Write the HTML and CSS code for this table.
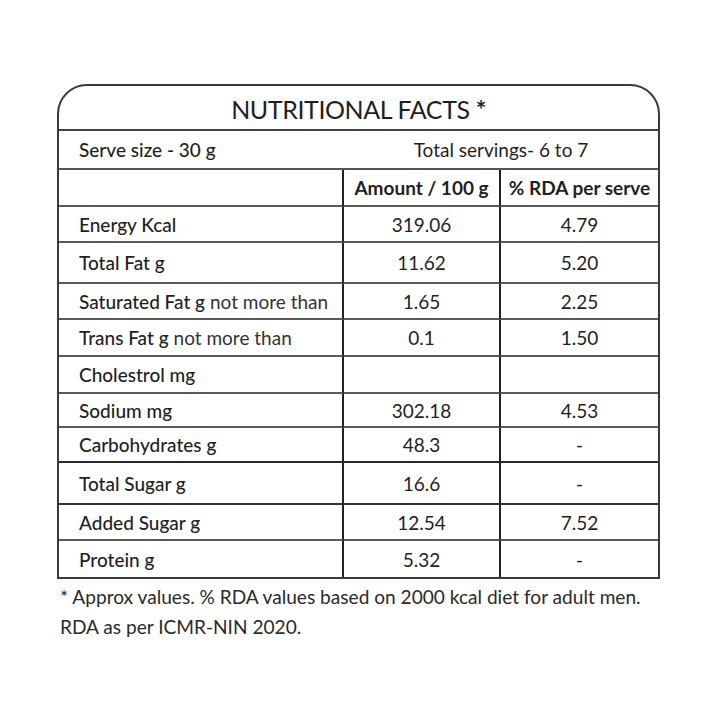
FILE: index.html
```html
<!DOCTYPE html>
<html>
<head>
<meta charset="utf-8">
<link rel="stylesheet" href="styles.css">
</head>
<body>
<div class="card">
  <div class="title">NUTRITIONAL FACTS <span class="star">*</span></div>
  <div class="serve">
    <span>Serve size - 30 g</span>
    <span class="servings">Total servings- 6 to 7</span>
  </div>
  <div class="grid">
    <div class="c l h1"></div><div class="c m h1 b">Amount / 100 g</div><div class="c r h1 b">% RDA per serve</div>
    <div class="c l r1">Energy Kcal</div><div class="c m r1">319.06</div><div class="c r r1">4.79</div>
    <div class="c l r2">Total Fat g</div><div class="c m r2">11.62</div><div class="c r r2">5.20</div>
    <div class="c l r3">Saturated Fat g <span class="lt">not more than</span></div><div class="c m r3">1.65</div><div class="c r r3">2.25</div>
    <div class="c l r4">Trans Fat g <span class="lt">not more than</span></div><div class="c m r4">0.1</div><div class="c r r4">1.50</div>
    <div class="c l r5">Cholestrol mg</div><div class="c m r5"></div><div class="c r r5"></div>
    <div class="c l r6">Sodium mg</div><div class="c m r6">302.18</div><div class="c r r6">4.53</div>
    <div class="c l r7">Carbohydrates g</div><div class="c m r7">48.3</div><div class="c r r7">-</div>
    <div class="c l r8">Total Sugar g</div><div class="c m r8">16.6</div><div class="c r r8">-</div>
    <div class="c l r9">Added Sugar g</div><div class="c m r9">12.54</div><div class="c r r9">7.52</div>
    <div class="c l r10 last">Protein g</div><div class="c m r10 last">5.32</div><div class="c r r10 last">-</div>
  </div>
</div>
<p class="note">* Approx values. % RDA values based on 2000 kcal diet for adult men.<br>RDA as per ICMR-NIN 2020.</p>
</body>
</html>
```
FILE: styles.css
```css
html, body {
  margin: 0;
  padding: 0;
  background: #fff;
}
body {
  font-family: Lato, "Open Sans", sans-serif;
  color: #1f1f1f;
  width: 720px;
  height: 720px;
  overflow: hidden;
}
.card {
  box-sizing: border-box;
  margin: 84px 0 0 57px;
  width: 603px;
  border: 2px solid #3a3a3a;
  border-radius: 30px 30px 0 0;
}
.title {
  box-sizing: border-box;
  height: 45px;
  border-bottom: 2px solid #444;
  display: flex;
  align-items: center;
  justify-content: center;
  font-size: 25px;
  letter-spacing: -0.4px;
  padding-top: 2px;
}
.star {
  font-weight: 700;
  margin-left: 6px;
}
.serve {
  box-sizing: border-box;
  height: 39px;
  border-bottom: 2px solid #555;
  display: flex;
  align-items: center;
  font-size: 19px;
  font-weight: 500;
  padding-left: 20px;
}
.servings {
  margin-left: auto;
  width: 314px;
  text-align: center;
  font-weight: 400;
}
.grid {
  display: grid;
  grid-template-columns: 285px 157px 157px;
}
.c {
  box-sizing: border-box;
  border-bottom: 2px solid #5a5a5a;
  display: flex;
  align-items: center;
  font-size: 19px;
  white-space: nowrap;
}
.l {
  border-right: 2px solid #222;
  padding-left: 20px;
  font-weight: 500;
}
.m {
  border-right: 2px solid #222;
  justify-content: center;
}
.r {
  justify-content: center;
}
.b {
  font-weight: 700;
}
.lt {
  font-weight: 400;
  margin-left: 5px;
  color: #333;
}
.last {
  border-bottom: none;
}
.h1 { height: 37px; }
.r1 { height: 36px; }
.r2 { height: 41px; }
.r3 { height: 36px; }
.r4 { height: 37px; }
.r5 { height: 37px; }
.r6 { height: 34px; }
.r7 { height: 35px; border-bottom-color: #2a2a2a; }
.r8 { height: 42px; border-bottom-color: #333; }
.r9 { height: 36px; }
.r10 { height: 36px; }
.note {
  margin: 3px 0 0 60px;
  font-size: 19.1px;
  line-height: 30px;
  color: #2a2a2a;
}
```
